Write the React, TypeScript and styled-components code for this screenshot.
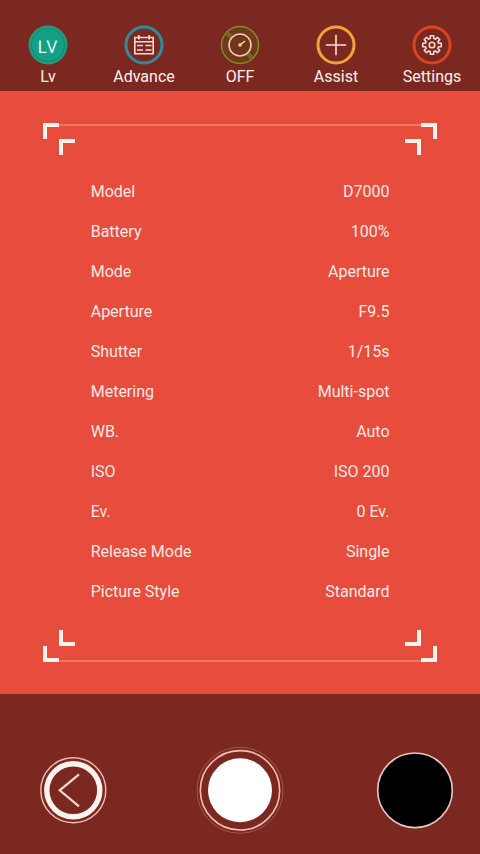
import React from 'react';
import styled, { createGlobalStyle } from 'styled-components';

const GlobalStyle = createGlobalStyle`
  * { box-sizing: border-box; }
  body { margin: 0; background: #7b2821; }
`;

const Screen = styled.div`
  width: 480px;
  height: 854px;
  display: flex;
  flex-direction: column;
  overflow: hidden;
  background: #7b2821;
  color: #ffe9e4;
  font: 16px/20px Roboto, sans-serif;
`;

const Toolbar = styled.header`
  height: 91px;
  display: grid;
  grid-template-columns: repeat(5, 1fr);
  padding-top: 25px;
`;

const Tool = styled.button`
  display: flex;
  flex-direction: column;
  align-items: center;
  gap: 2px;
  padding: 0;
  border: 0;
  background: none;
  color: #fff0ec;
  font: inherit;
`;

const ToolIcon = styled.svg`
  width: 40px;
  height: 40px;
  fill: none;
  stroke: #fbdcd5;
  stroke-width: 1.6;
  text-rendering: geometricPrecision;
`;

const Panel = styled.main`
  height: 603px;
  padding: 32px 43px 0;
  background: #e84c3d;
`;

const Frame = styled.div`
  height: 539px;
  display: flex;
  flex-direction: column;
`;

const Edge = styled.div`
  height: 32px;
  display: flex;
  align-items: flex-start;
`;

const BottomEdge = styled(Edge)`
  align-items: flex-end;
  margin-top: auto;
`;

const Rule = styled.div<{ $bottom?: boolean }>`
  flex: 1;
  height: 2px;
  margin: ${p => (p.$bottom ? '0 -16px' : '1px -16px 0')};
  background: #f17467;
`;

const Corner = styled.svg<{ $right?: boolean; $bottom?: boolean }>`
  width: 32px;
  height: 32px;
  fill: none;
  stroke: #fff2ed;
  stroke-width: 4;
  transform: scale(${p => (p.$right ? -1 : 1)}, ${p => (p.$bottom ? -1 : 1)});
`;

const Info = styled.dl`
  margin: 17px 47.5px 0 47.7px;
`;

const Row = styled.div`
  height: 40px;
  display: flex;
  align-items: center;
  justify-content: space-between;
`;

const Name = styled.dt``;
const Value = styled.dd`
  margin: 0;
`;

const Controls = styled.footer`
  flex: 1;
  display: flex;
  align-items: center;
  padding: 32px 25px 0 39px;
`;

const RoundButton = styled.button<{ $size: number; $gap?: number }>`
  width: ${p => p.$size}px;
  height: ${p => p.$size}px;
  margin-right: ${p => p.$gap ?? 0}px;
  padding: 0;
  border: 0;
  background: none;

  svg {
    display: block;
    width: 100%;
    height: 100%;
    fill: none;
  }
`;

const LogoText = styled.text`
  font: 17.5px Roboto, sans-serif;
  fill: #d9fff2;
  stroke: none;
`;

const gearPath = Array.from({ length: 8 }, (_, i) => {
  const base = (i * Math.PI) / 4 - Math.PI / 2;
  return [[-0.26, 6.8], [-0.18, 9.4], [0.18, 9.4], [0.26, 6.8]]
    .map(([a, r]) => `${(20 + r * Math.cos(base + a)).toFixed(2)} ${(20 + r * Math.sin(base + a)).toFixed(2)}`)
    .join('L');
}).join('L');

const tools: { label: string; icon: React.ReactNode }[] = [
  {
    label: 'Lv',
    icon: (
      <>
        <circle cx="20" cy="20" r="18.4" fill="#16a085" stroke="#249b78" strokeWidth="2" />
        <circle cx="20" cy="20" r="16.5" stroke="#0c8971" strokeWidth="1" />
        <LogoText x="9.7" y="28.2" textLength="9" lengthAdjust="spacingAndGlyphs">L</LogoText>
        <LogoText x="18.2" y="27.8">V</LogoText>
      </>
    ),
  },
  {
    label: 'Advance',
    icon: (
      <>
        <circle cx="20" cy="20" r="18" stroke="#308c9c" strokeWidth="3" />
        <path d="M10.8 12.5h18.4v16.2H10.8zM10.8 16.7h18.4M14.8 10v4.5M25.2 10v4.5" />
        <path d="M13 20.5h6M21.5 20.5h6M13 25h6M21.5 25h6" />
      </>
    ),
  },
  {
    label: 'OFF',
    icon: (
      <>
        <circle cx="20" cy="20" r="18.5" fill="#6c3c1a" stroke="#8c8530" strokeWidth="1.5" />
        <path d="M7 8L32 33" stroke="#786522" strokeWidth="4" />
        <circle cx="20" cy="20" r="11" fill="#71351d" stroke="#fac4ac" />
        <circle cx="20" cy="20" r="1.8" fill="#f5d398" stroke="none" />
        <path d="M20 20l5-4" stroke="#eedc91" />
      </>
    ),
  },
  {
    label: 'Assist',
    icon: (
      <>
        <circle cx="20" cy="20" r="18" stroke="#f3a23a" strokeWidth="3" />
        <path d="M20 9.8v20.4M9.8 20h20.4" />
      </>
    ),
  },
  {
    label: 'Settings',
    icon: (
      <>
        <circle cx="20" cy="20" r="18" stroke="#d74524" strokeWidth="3" />
        <path d={`M${gearPath}Z`} strokeLinejoin="round" />
        <circle cx="20" cy="20" r="2.8" />
      </>
    ),
  },
];

const details = [
  ['Model', 'D7000'],
  ['Battery', '100%'],
  ['Mode', 'Aperture'],
  ['Aperture', 'F9.5'],
  ['Shutter', '1/15s'],
  ['Metering', 'Multi-spot'],
  ['WB.', 'Auto'],
  ['ISO', 'ISO 200'],
  ['Ev.', '0 Ev.'],
  ['Release Mode', 'Single'],
  ['Picture Style', 'Standard'],
];

function CornerMark({ right, bottom }: { right?: boolean; bottom?: boolean }) {
  return (
    <Corner $right={right} $bottom={bottom} viewBox="0 0 32 32">
      <path d="M2 16V2H16M18 32V18H32" />
    </Corner>
  );
}

export default function App() {
  return (
    <Screen>
      <GlobalStyle />
      <Toolbar>
        {tools.map(tool => (
          <Tool key={tool.label}>
            <ToolIcon viewBox="0 0 40 40">{tool.icon}</ToolIcon>
            {tool.label}
          </Tool>
        ))}
      </Toolbar>
      <Panel>
        <Frame>
          <Edge>
            <CornerMark />
            <Rule />
            <CornerMark right />
          </Edge>
          <Info>
            {details.map(([name, value]) => (
              <Row key={name}>
                <Name>{name}</Name>
                <Value>{value}</Value>
              </Row>
            ))}
          </Info>
          <BottomEdge>
            <CornerMark bottom />
            <Rule $bottom />
            <CornerMark right bottom />
          </BottomEdge>
        </Frame>
      </Panel>
      <Controls>
        <RoundButton $size={68} $gap={89} aria-label="Back">
          <svg viewBox="0 0 68 68" stroke="#fff2ed">
            <circle cx="34.3" cy="34.3" r="32.5" strokeWidth="1.4" stroke="#f3bdb5" />
            <circle cx="34.3" cy="34.3" r="26.5" strokeWidth="5.4" />
            <path d="M40 18.3L20.7 34.3L40 50.3" strokeWidth="2.2" stroke="#fbd7d0" />
          </svg>
        </RoundButton>
        <RoundButton $size={88} $gap={91} aria-label="Take photo">
          <svg viewBox="0 0 88 88">
            <circle cx="44" cy="44.3" r="43" stroke="#a2574e" />
            <circle cx="44" cy="44.3" r="39.7" stroke="#f5bdb3" strokeWidth="1.6" />
            <circle cx="44" cy="44.3" r="32" fill="#fff" />
          </svg>
        </RoundButton>
        <RoundButton $size={80} aria-label="Open gallery">
          <svg viewBox="0 0 80 80">
            <circle cx="40" cy="40.3" r="37.3" fill="#000" stroke="#ecc4bf" strokeWidth="1.6" />
          </svg>
        </RoundButton>
      </Controls>
    </Screen>
  );
}
